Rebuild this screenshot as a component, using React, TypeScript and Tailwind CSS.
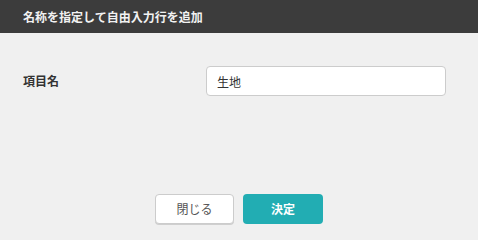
export default function App() {
  return (
    <div className="w-[478px] h-[240px] bg-[#f0f0f0] flex flex-col" style={{ fontFamily: '"Noto Sans CJK JP", "Noto Sans", sans-serif' }}>
      <div className="h-[33px] bg-[#3c3c3c] flex items-center px-[23px]">
        <span className="text-[12px] font-bold text-[#f2f2f2] leading-none">名称を指定して自由入力行を追加</span>
      </div>
      <div className="flex items-center pl-[23px] pt-[33px]">
        <span className="w-[183px] text-[12px] font-bold text-[#333]">項目名</span>
        <input
          type="text"
          defaultValue="生地"
          className="w-[240px] h-[30px] bg-white border border-[#cccccc] rounded-[4px] px-[10px] text-[12px] text-[#333] outline-none"
        />
      </div>
      <div className="flex-1" />
      <div className="flex justify-center gap-[9px] pb-[16px]">
        <button className="w-[79px] h-[30px] bg-white border border-[#cccccc] shadow-[0_1px_0_#cfcfcf] rounded-[4px] text-[12px] text-[#555]">閉じる</button>
        <button className="w-[80px] h-[30px] bg-[#22adb3] rounded-[4px] text-[12px] font-bold text-white">決定</button>
      </div>
    </div>
  )
}
